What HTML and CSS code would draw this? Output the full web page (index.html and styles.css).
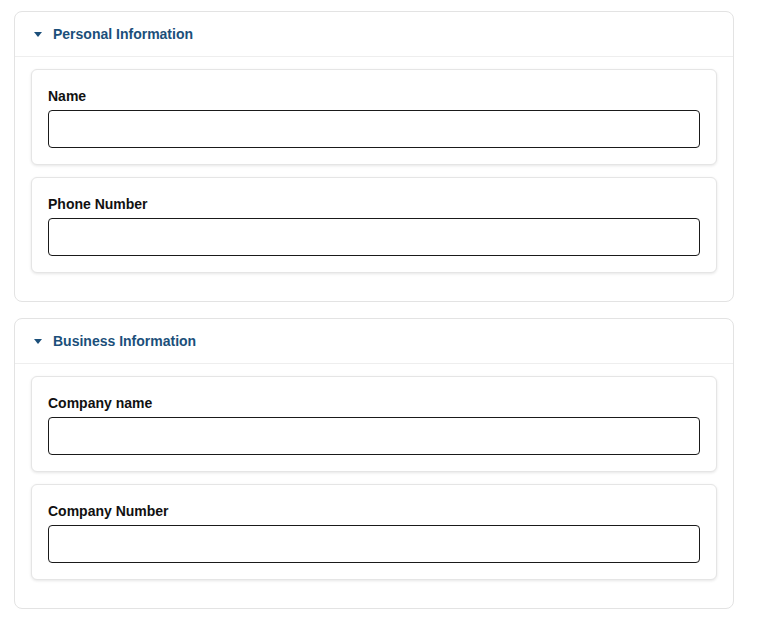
FILE: index.html
```html
<!DOCTYPE html>
<html lang="en">
<head>
<meta charset="utf-8">
<title>Form</title>
<link rel="stylesheet" href="styles.css">
</head>
<body>
<div class="page">
  <section class="panel">
    <div class="panel-header">
      <svg class="caret" width="8" height="5" viewBox="0 0 8 5"><path d="M0 0H8L4 5Z" fill="#1b4f7a"/></svg>
      <span class="panel-title">Personal Information</span>
    </div>
    <div class="panel-body">
      <div class="field-card">
        <label class="field-label">Name</label>
        <input class="field-input" type="text">
      </div>
      <div class="field-card">
        <label class="field-label">Phone Number</label>
        <input class="field-input" type="text">
      </div>
    </div>
  </section>
  <section class="panel">
    <div class="panel-header">
      <svg class="caret" width="8" height="5" viewBox="0 0 8 5"><path d="M0 0H8L4 5Z" fill="#1b4f7a"/></svg>
      <span class="panel-title">Business Information</span>
    </div>
    <div class="panel-body">
      <div class="field-card">
        <label class="field-label">Company name</label>
        <input class="field-input" type="text">
      </div>
      <div class="field-card">
        <label class="field-label">Company Number</label>
        <input class="field-input" type="text">
      </div>
    </div>
  </section>
</div>
</body>
</html>
```
FILE: styles.css
```css
* { box-sizing: border-box; }
html, body { margin: 0; padding: 0; background: #fff; }
body { font-family: "Liberation Sans", Arial, sans-serif; color: #111; }
.page { padding: 11px 0 0 14px; width: 734px; }
.panel {
  border: 1px solid #e3e3e3;
  border-radius: 8px;
  margin-bottom: 16px;
  background: #fff;
}
.panel-header {
  height: 45px;
  display: flex;
  align-items: center;
  padding-left: 19px;
  border-bottom: 1px solid #eeeeee;
}
.caret { display: block; margin-right: 11px; margin-top: 1px; }
.panel-title {
  font-size: 14px;
  font-weight: bold;
  color: #1b4f7a;
}
.panel-body { padding: 12px 16px 16px; }
.field-card {
  border: 1px solid #e5e5e5;
  border-radius: 6px;
  padding: 16px;
  margin-bottom: 12px;
  box-shadow: 0 1px 3px rgba(0, 0, 0, 0.10);
  background: #fff;
}
.field-label {
  display: block;
  font-size: 14px;
  font-weight: bold;
  line-height: 20px;
  margin-bottom: 4px;
  color: #111;
}
.field-input {
  display: block;
  width: 100%;
  height: 38px;
  border: 1px solid #1a1a1a;
  border-radius: 4px;
  padding: 0 10px;
  font: 14px "Liberation Sans", Arial, sans-serif;
  background: #fff;
  outline: none;
}
```
